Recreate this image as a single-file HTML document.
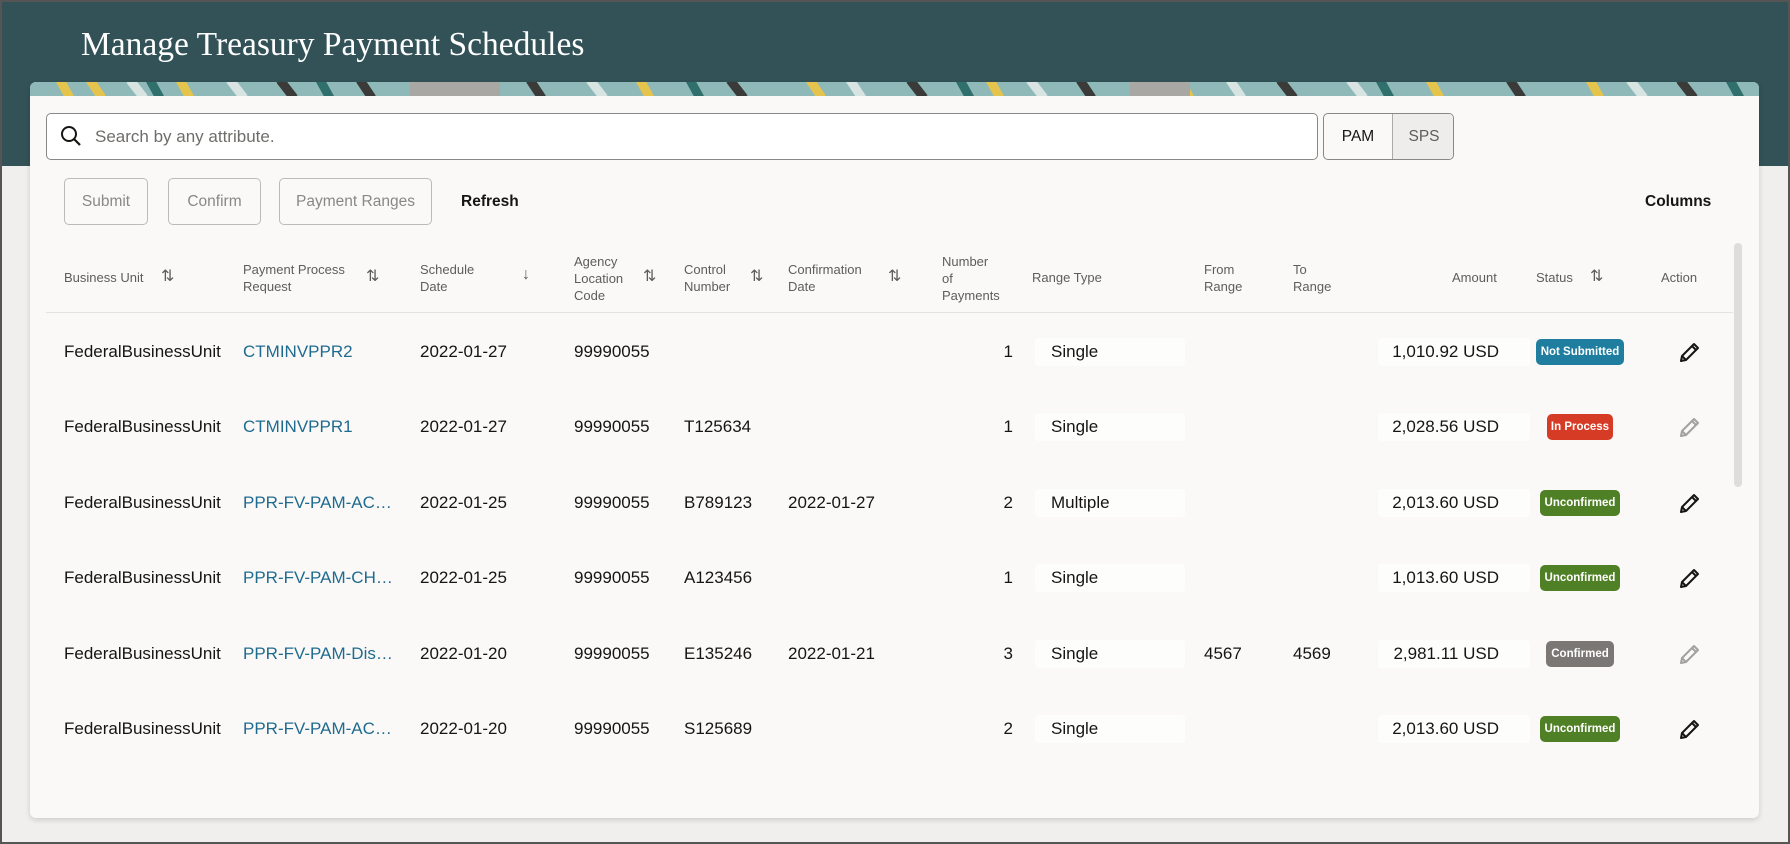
<!DOCTYPE html>
<html><head><meta charset="utf-8"><style>
*{margin:0;padding:0;box-sizing:border-box}
body{width:1790px;height:844px;position:relative;overflow:hidden;background:#f0efee;font-family:"Liberation Sans",sans-serif;color:#161513}
.a{position:absolute;white-space:nowrap}
.hdr{left:0;top:0;width:1790px;height:166px;background:#325257}
.title{left:81px;top:26px;font-family:"Liberation Serif",serif;font-size:33.5px;color:#fff}
.card{left:30px;top:82px;width:1729px;height:736px;background:#faf9f8;border-radius:6px;overflow:hidden;box-shadow:0 2px 6px rgba(0,0,0,.15)}
.btn{top:178px;height:47px;border:1px solid #bbb;border-radius:5px;color:#8a8886;font-size:15.5px;line-height:45px;text-align:center}
.th{font-size:13px;color:#5f5d5a;line-height:17px}
.s{font-size:16px;color:#5f5d5a}
.td{font-size:17px;line-height:20px}
.lnk{color:#1f6b8f}
.pill{height:26px;border-radius:5px;color:#fff;font-size:11.5px;font-weight:bold;line-height:26px;text-align:center}
.soft{background:#fdfdfc;border-radius:4px;height:28px}
</style></head><body>
<div class="a hdr"></div>
<div class="a title">Manage Treasury Payment Schedules</div>
<div class="a card">
<svg width="1729" height="14" style="position:absolute;left:0;top:0">
<rect width="1729" height="14" fill="#8fb9b8"/>
<g stroke-width="9">
<path d="M30 -2 l10 18 M60 -2 l12 18 M150 -2 l10 18 M400 -2 l12 18 M610 -2 l10 18 M780 -2 l12 18 M960 -2 l10 18 M1150 -2 l10 18 M1400 -2 l10 18 M1560 -2 l10 18" stroke="#e4c44c"/>
<path d="M250 -2 l14 18 M330 -2 l12 18 M500 -2 l12 18 M700 -2 l14 18 M880 -2 l14 18 M1050 -2 l12 18 M1250 -2 l14 18 M1480 -2 l12 18 M1650 -2 l14 18" stroke="#3a3a38"/>
<path d="M100 -2 l14 18 M200 -2 l14 18 M450 -2 l14 18 M560 -2 l14 18 M820 -2 l12 18 M1000 -2 l14 18 M1200 -2 l12 18 M1320 -2 l14 18 M1600 -2 l14 18" stroke="#d7e4e2"/>
<path d="M380 0 h90 v14 h-90z M1100 0 h60 v14 h-60z" stroke="none" fill="#a9a7a3"/>
<path d="M120 -2 l10 18 M290 -2 l10 18 M660 -2 l10 18 M930 -2 l10 18 M1350 -2 l10 18 M1700 -2 l10 18" stroke="#2f6f6c"/>
</g></svg>
</div>
<div class="a" style="left:46px;top:113px;width:1272px;height:47px;background:#fff;border:1px solid #8a8886;border-radius:5px"></div>
<svg class="a" style="left:60px;top:125px" width="22" height="22" viewBox="0 0 22 22"><circle cx="9" cy="9" r="7" fill="none" stroke="#161513" stroke-width="2"/><path d="M14 14 L20 20" stroke="#161513" stroke-width="2.2"/></svg>
<div class="a" style="left:95px;top:127px;font-size:17px;color:#6f6d6a">Search by any attribute.</div>
<div class="a" style="left:1323px;top:113px;width:131px;height:47px;border:1px solid #8a8886;border-radius:5px;overflow:hidden;background:#faf9f8">
<div class="a" style="left:0;top:0;width:68px;height:45px;line-height:45px;text-align:center;font-size:15.5px">PAM</div>
<div class="a" style="left:68px;top:0;width:63px;height:45px;line-height:45px;text-align:center;font-size:15.5px;color:#5f5d5a;background:#eeedeb;border-left:1px solid #aaa">SPS</div></div>
<div class="a btn" style="left:64px;width:84px">Submit</div>
<div class="a btn" style="left:168px;width:93px">Confirm</div>
<div class="a btn" style="left:279px;width:153px">Payment Ranges</div>
<div class="a" style="left:461px;top:193px;font-size:15.5px;font-weight:bold">Refresh</div>
<div class="a" style="left:1645px;top:193px;font-size:15.5px;font-weight:bold">Columns</div>
<div class="a" style="left:1734px;top:243px;width:8px;height:244px;background:#dedddb;border-radius:4px"></div>
<div class="a" style="left:46px;top:312px;width:1687px;height:1px;background:#e4e2e0"></div>
<div class="a th" style="left:64px;top:269px">Business Unit</div><div class="a s" style="left:161px;top:266px">⇅</div>
<div class="a th" style="left:243px;top:261px">Payment Process<br>Request</div><div class="a s" style="left:366px;top:266px">⇅</div>
<div class="a th" style="left:420px;top:261px">Schedule<br>Date</div><div class="a s" style="left:522px;top:266px">↓</div>
<div class="a th" style="left:574px;top:253px">Agency<br>Location<br>Code</div><div class="a s" style="left:643px;top:266px">⇅</div>
<div class="a th" style="left:684px;top:261px">Control<br>Number</div><div class="a s" style="left:750px;top:266px">⇅</div>
<div class="a th" style="left:788px;top:261px">Confirmation<br>Date</div><div class="a s" style="left:888px;top:266px">⇅</div>
<div class="a th" style="left:942px;top:253px">Number<br>of<br>Payments</div>
<div class="a th" style="left:1032px;top:269px">Range Type</div>
<div class="a th" style="left:1204px;top:261px">From<br>Range</div>
<div class="a th" style="left:1293px;top:261px">To<br>Range</div>
<div class="a th" style="left:1452px;top:269px">Amount</div>
<div class="a th" style="left:1536px;top:269px">Status</div><div class="a s" style="left:1590px;top:266px">⇅</div>
<div class="a th" style="left:1661px;top:269px">Action</div>

<div id="rows"></div>
<div class="a" style="left:0;top:0;width:1790px;height:844px;border:2px solid #555;pointer-events:none"></div>
<script>
var d=[["CTMINVPPR2","2022-01-27","","","1","Single","","","1,010.92 USD","Not Submitted","#1f7ea0",1,88],
["CTMINVPPR1","2022-01-27","T125634","","1","Single","","","2,028.56 USD","In Process","#d63b25",0,66],
["PPR-FV-PAM-AC…","2022-01-25","B789123","2022-01-27","2","Multiple","","","2,013.60 USD","Unconfirmed","#508025",1,80],
["PPR-FV-PAM-CH…","2022-01-25","A123456","","1","Single","","","1,013.60 USD","Unconfirmed","#508025",1,80],
["PPR-FV-PAM-Dis…","2022-01-20","E135246","2022-01-21","3","Single","4567","4569","2,981.11 USD","Confirmed","#7a7775",0,68],
["PPR-FV-PAM-AC…","2022-01-20","S125689","","2","Single","","","2,013.60 USD","Unconfirmed","#508025",1,80]];
var h="";
d.forEach(function(r,i){var c=352+i*75.4,t=c-10;
h+='<div class="a td" style="left:64px;top:'+t+'px">FederalBusinessUnit</div>';
h+='<div class="a td lnk" style="left:243px;top:'+t+'px">'+r[0]+'</div>';
h+='<div class="a td" style="left:420px;top:'+t+'px">'+r[1]+'</div>';
h+='<div class="a td" style="left:574px;top:'+t+'px">99990055</div>';
h+='<div class="a td" style="left:684px;top:'+t+'px">'+r[2]+'</div>';
h+='<div class="a td" style="left:788px;top:'+t+'px">'+r[3]+'</div>';
h+='<div class="a td" style="left:963px;width:50px;text-align:right;top:'+t+'px">'+r[4]+'</div>';
h+='<div class="a soft" style="left:1035px;width:150px;top:'+(c-14)+'px"></div>';
h+='<div class="a td" style="left:1051px;top:'+t+'px">'+r[5]+'</div>';
h+='<div class="a td" style="left:1204px;top:'+t+'px">'+r[6]+'</div>';
h+='<div class="a td" style="left:1293px;top:'+t+'px">'+r[7]+'</div>';
h+='<div class="a soft" style="left:1378px;width:152px;top:'+(c-14)+'px"></div>';
h+='<div class="a td" style="left:1380px;width:119px;text-align:right;top:'+t+'px">'+r[8]+'</div>';
h+='<div class="a pill" style="left:'+(1580-r[12]/2)+'px;width:'+r[12]+'px;top:'+(c-13)+'px;background:'+r[10]+'">'+r[9]+'</div>';
var col=r[11]?"#161513":"#a3a19e";
h+='<svg class="a" style="left:1678px;top:'+(c-12)+'px" width="24" height="24" viewBox="0 0 24 24"><path d="M3 21 L4 16 L16 4 L20 8 L8 20 Z M14 6 L18 10 M4 16 L8 20" fill="none" stroke="'+col+'" stroke-width="2" stroke-linejoin="round"/></svg>';
});
document.getElementById("rows").innerHTML=h;
</script>
</body></html>
